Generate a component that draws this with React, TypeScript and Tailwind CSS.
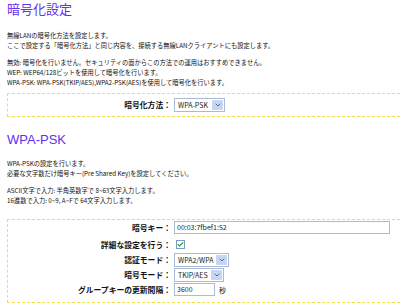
import { Check, ChevronDown } from 'lucide-react';

const jp = { fontFamily: '"Noto Sans CJK JP", "Liberation Sans", sans-serif' };

const Select = ({ value, width }: { value: string; width: string }) => (
  <div className={`flex h-[14px] items-stretch border border-[#a9bbd6] bg-white ${width}`}>
    <span className="flex-1 pl-[3px] text-[7px] leading-[12px] text-[#222]" style={jp}>
      {value}
    </span>
    <span className="m-px flex w-[11px] items-center justify-center rounded-[1px] bg-[#c7d6f2]">
      <ChevronDown size={8} strokeWidth={3} className="text-[#4d6aa8]" />
    </span>
  </div>
);

const Row = ({ label, children, className = '' }: { label: string; children: React.ReactNode; className?: string }) => (
  <div className={`flex h-[15px] items-center ${className}`}>
    <div className="w-[166px] pr-[3px] text-right text-[7.8px] font-bold text-[#111]">{label}</div>
    <div className="flex items-center">{children}</div>
  </div>
);

const App = () => {
  return (
    <div className="h-[303px] w-[400px] overflow-hidden bg-white pl-[7px] text-[6.25px] leading-[10px] text-[#111]" style={jp}>
      <h1 className="pt-[1px] text-[13px] leading-[16px] text-[#6230ee]" style={jp}>
        暗号化設定
      </h1>

      <div className="mt-[14px]">
        <p>無線LANの暗号化方法を設定します。</p>
        <p>ここで設定する「暗号化方法」と同じ内容を、接続する無線LANクライアントにも設定します。</p>
        <p className="mt-[7px]">無効: 暗号化を行いません。セキュリティの面からこの方法での運用はおすすめできません。</p>
        <p>WEP: WEP64/128ビットを使用して暗号化を行います。</p>
        <p>WPA-PSK: WPA-PSK(TKIP/AES),WPA2-PSK(AES)を使用して暗号化を行います。</p>
      </div>

      <div className="mt-[5px] border border-r-0 border-dashed border-[#f0e04a] pb-[4px] pt-[3px]">
        <Row label="暗号化方法：">
          <Select value="WPA-PSK" width="w-[51px]" />
        </Row>
      </div>

      <h2
        className="mt-[15px] text-[13px] leading-[16px] text-[#6230ee]"
        style={{ fontFamily: '"Liberation Sans", "Noto Sans CJK JP", sans-serif' }}
      >
        WPA-PSK
      </h2>

      <div className="mt-[11px]">
        <p>WPA-PSKの設定を行います。</p>
        <p>必要な文字数だけ暗号キー(Pre Shared Key)を設定してください。</p>
        <p className="mt-[7px]">ASCII文字で入力: 半角英数字で 8~63文字入力します。</p>
        <p>16進数で入力: 0~9, A~Fで 64文字入力します。</p>
      </div>

      <div className="mt-[13px] border border-r-0 border-dashed border-[#f0e04a] pb-[5px]">
        <Row label="暗号キー：" className="mb-[2px]">
          <div className="h-[13px] w-[216px] border border-[#a9bbd6] bg-white pl-[2px] text-[7px] leading-[11px] text-[#222]">
            00:03:7fbef1:52
          </div>
        </Row>
        <Row label="詳細な設定を行う：">
          <div className="ml-[2px] flex h-[9px] w-[9px] items-center justify-center border border-[#7a9cc8] bg-white">
            <Check size={7} strokeWidth={4} className="text-[#22a030]" />
          </div>
        </Row>
        <Row label="認証モード：">
          <Select value="WPA2/WPA" width="w-[55px]" />
        </Row>
        <Row label="暗号モード：">
          <Select value="TKIP/AES" width="w-[50px]" />
        </Row>
        <Row label="グループキーの更新間隔：">
          <div className="h-[13px] w-[41px] border border-[#a9bbd6] bg-white pl-[2px] text-[7px] leading-[11px] text-[#222]">
            3600
          </div>
          <span className="ml-[4px] text-[7px]">秒</span>
        </Row>
      </div>
    </div>
  );
};

export default App;
